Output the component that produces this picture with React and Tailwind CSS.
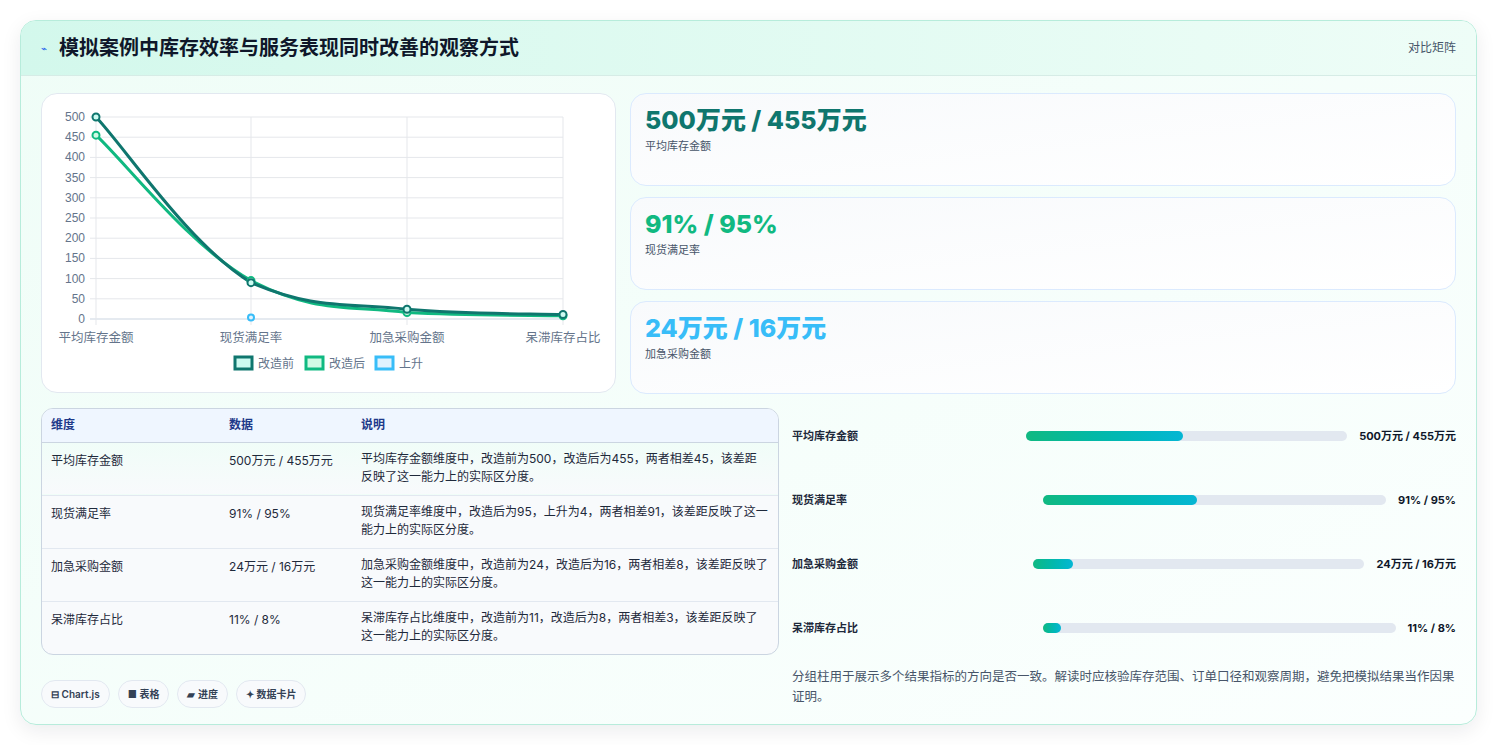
import React from "react";

const X = [54, 209, 365, 521];
const Y = (v) => 225 - (v / 500) * 202;
function curve(vals) {
  const p = vals.map((v, i) => [X[i], Y(v)]);
  let d = `M${p[0][0]},${p[0][1]}`;
  for (let i = 0; i < p.length - 1; i++) {
    const p0 = p[i - 1] || p[i], p1 = p[i], p2 = p[i + 1], p3 = p[i + 2] || p2;
    const t = 0.4 / 2;
    let c1y = p1[1] + (p2[1] - p0[1]) * t, c2y = p2[1] - (p3[1] - p1[1]) * t;
    c1y = Math.min(Math.max(c1y, Math.min(p1[1], p2[1])), Math.max(p1[1], p2[1]));
    c2y = Math.min(Math.max(c2y, Math.min(p1[1], p2[1])), Math.max(p1[1], p2[1]));
    const c1x = p1[0] + (p2[0] - p0[0]) * t, c2x = p2[0] - (p3[0] - p1[0]) * t;
    d += ` C${c1x},${c1y} ${c2x},${c2y} ${p2[0]},${p2[1]}`;
  }
  return d;
}
const before = [500, 90, 24, 11];
const after = [455, 95, 16, 8];
const cats = ["平均库存金额", "现货满足率", "加急采购金额", "呆滞库存占比"];

function Chart() {
  const ticks = [0, 50, 100, 150, 200, 250, 300, 350, 400, 450, 500];
  return (
    <svg width="575" height="300" viewBox="0 0 575 300" className="block">
      {ticks.map((t) => (
        <g key={t}>
          <line x1="48" x2="521" y1={Y(t)} y2={Y(t)} stroke={t === 0 ? "#cbd5e1" : "#e5e7eb"} />
          <text x="43" y={Y(t) + 4} textAnchor="end" fontSize="12" fill="#64748b" fontFamily="Liberation Sans, sans-serif">{t}</text>
        </g>
      ))}
      {X.map((x, i) => (
        <g key={i}>
          <line x1={x} x2={x} y1="23" y2="231" stroke="#e5e7eb" />
          <text x={x} y="248" textAnchor="middle" fontSize="12.5" fill="#64748b" fontFamily="Noto Sans CJK SC, sans-serif">{cats[i]}</text>
        </g>
      ))}
      <path d={curve(after)} fill="none" stroke="#10b981" strokeWidth="3" />
      <path d={curve(before)} fill="none" stroke="#0f766e" strokeWidth="3" />
      {after.map((v, i) => <circle key={"a" + i} cx={X[i]} cy={Y(v)} r="3.5" fill="#d1fae5" stroke="#10b981" strokeWidth="2" />)}
      {before.map((v, i) => <circle key={"b" + i} cx={X[i]} cy={Y(v)} r="3.5" fill="#ccfbf1" stroke="#0f766e" strokeWidth="2" />)}
      <circle cx={X[1]} cy={Y(4)} r="3" fill="#e0f2fe" stroke="#38bdf8" strokeWidth="2" />
      <g fontSize="12" fill="#64748b" fontFamily="Noto Sans CJK SC, sans-serif">
        <rect x="193" y="263" width="17" height="12" fill="#ccfbf1" stroke="#0f766e" strokeWidth="3" />
        <text x="216" y="274">改造前</text>
        <rect x="264" y="263" width="17" height="12" fill="#d1fae5" stroke="#10b981" strokeWidth="3" />
        <text x="287" y="274">改造后</text>
        <rect x="334" y="263" width="17" height="12" fill="#e0f2fe" stroke="#38bdf8" strokeWidth="3" />
        <text x="357" y="274">上升</text>
      </g>
    </svg>
  );
}

const stats = [
  ["500万元 / 455万元", "平均库存金额", "text-[#0f766e]"],
  ["91% / 95%", "现货满足率", "text-[#10b981]"],
  ["24万元 / 16万元", "加急采购金额", "text-[#38bdf8]"],
];
const rows = [
  ["平均库存金额", "500万元 / 455万元", "平均库存金额维度中，改造前为500，改造后为455，两者相差45，该差距反映了这一能力上的实际区分度。"],
  ["现货满足率", "91% / 95%", "现货满足率维度中，改造后为95，上升为4，两者相差91，该差距反映了这一能力上的实际区分度。"],
  ["加急采购金额", "24万元 / 16万元", "加急采购金额维度中，改造前为24，改造后为16，两者相差8，该差距反映了这一能力上的实际区分度。"],
  ["呆滞库存占比", "11% / 8%", "呆滞库存占比维度中，改造前为11，改造后为8，两者相差3，该差距反映了这一能力上的实际区分度。"],
];
const bars = [
  ["平均库存金额", "500万元 / 455万元", 49, "w-[222px]"],
  ["现货满足率", "91% / 95%", 45, "w-[239px]"],
  ["加急采购金额", "24万元 / 16万元", 12, "w-[229px]"],
  ["呆滞库存占比", "11% / 8%", 5, "w-[239px]"],
];

export default function App() {
  return (
    <div className="min-h-[745px] bg-white p-5 pr-[21px]" style={{ fontFamily: "Inter, 'Noto Sans CJK SC', sans-serif" }}>
      <div className="rounded-2xl border border-[#b7ecdb] bg-gradient-to-br from-[#effdf7] to-[#fbfffe] shadow-[0_6px_20px_rgba(15,23,42,0.08)] overflow-hidden">
        <div className="h-[55px] flex items-center justify-between px-5 bg-gradient-to-r from-[#d3f8ec] to-[#eefdf7] border-b border-[#d6ece6]">
          <div className="flex items-center gap-3">
            <span className="text-[10px] text-[#2563eb]">⌁</span>
            <h1 className="text-[20px] font-bold text-[#0f172a]">模拟案例中库存效率与服务表现同时改善的观察方式</h1>
          </div>
          <span className="text-[12px] text-[#475569]">对比矩阵</span>
        </div>
        <div className="p-5 pt-[17px] pb-[16px]">
          <div className="flex gap-[14px]">
            <div className="w-[575px] h-[300px] rounded-2xl border border-[#e2e8f0] bg-white flex-none overflow-hidden">
              <Chart />
            </div>
            <div className="flex-1 flex flex-col gap-[11px]">
              {stats.map(([v, l, c]) => (
                <div key={l} className="h-[93px] rounded-2xl border border-[#dbeafe] bg-gradient-to-br from-[#f8fafc] to-white px-[14px] pt-[10px]">
                  <div className={`text-[25px] font-extrabold leading-[32px] ${c}`}>{v}</div>
                  <div className="text-[11px] text-[#475569] mt-0.5">{l}</div>
                </div>
              ))}
            </div>
          </div>
          <div className="flex gap-[13px] mt-[14px]">
            <div className="w-[738px] flex-none">
              <div className="rounded-xl border border-[#cbd5e1] overflow-hidden bg-[#f8fafc]">
                <table className="w-full text-[12px] text-[#1e293b] border-collapse">
                  <thead>
                    <tr className="bg-[#eff6ff] text-[#1e3a8a] text-left h-[33px] border-b border-[#cbd5e1]">
                      <th className="font-semibold pl-[9px] w-[187px]">维度</th>
                      <th className="font-semibold w-[132px]">数据</th>
                      <th className="font-semibold">说明</th>
                    </tr>
                  </thead>
                  <tbody>
                    {rows.map((r, i) => (
                      <tr key={i} className={`h-[53px] align-top ${i < 3 ? "border-b border-[#e2e8f0]" : ""} ${i === 0 ? "bg-gradient-to-b from-[#f0fdf8] to-[#f8fafc]" : ""}`}>
                        <td className="pl-[9px] pt-[9px]">{r[0]}</td>
                        <td className="pt-[9px]">{r[1]}</td>
                        <td className="pt-[7px] pr-[10px] pb-[7px] leading-[18px]">{r[2]}</td>
                      </tr>
                    ))}
                  </tbody>
                </table>
              </div>
              <div className="flex gap-2 mt-[25px] text-[10px] font-semibold text-[#334155]">
                {["⊟ Chart.js", "■ 表格", "▰ 进度", "✦ 数据卡片"].map((c) => (
                  <span key={c} className="h-[28px] px-[9px] flex items-center rounded-full border border-[#e2e8f0] bg-[#f8fafc]">{c}</span>
                ))}
              </div>
            </div>
            <div className="flex-1 flex flex-col pt-[20px]">
              {bars.map(([l, v, p, w]) => (
                <div key={l} className="h-[64px] flex items-start gap-3 text-[11px] font-semibold text-[#1e293b]">
                  <span className={`${w} flex-none leading-[16px]`}>{l}</span>
                  <div className="flex-1 h-[10px] mt-[3px] rounded-full bg-[#e2e8f0]">
                    <div className="h-full rounded-full bg-gradient-to-r from-[#10b981] to-[#06b6d4]" style={{ width: `${p}%` }} />
                  </div>
                  <span className="font-bold text-[#0f172a] leading-[16px]">{v}</span>
                </div>
              ))}
              <p className="text-[12.5px] leading-[20px] text-[#475569] mt-[-17px]">分组柱用于展示多个结果指标的方向是否一致。解读时应核验库存范围、订单口径和观察周期，避免把模拟结果当作因果证明。</p>
            </div>
          </div>
        </div>
      </div>
    </div>
  );
}
